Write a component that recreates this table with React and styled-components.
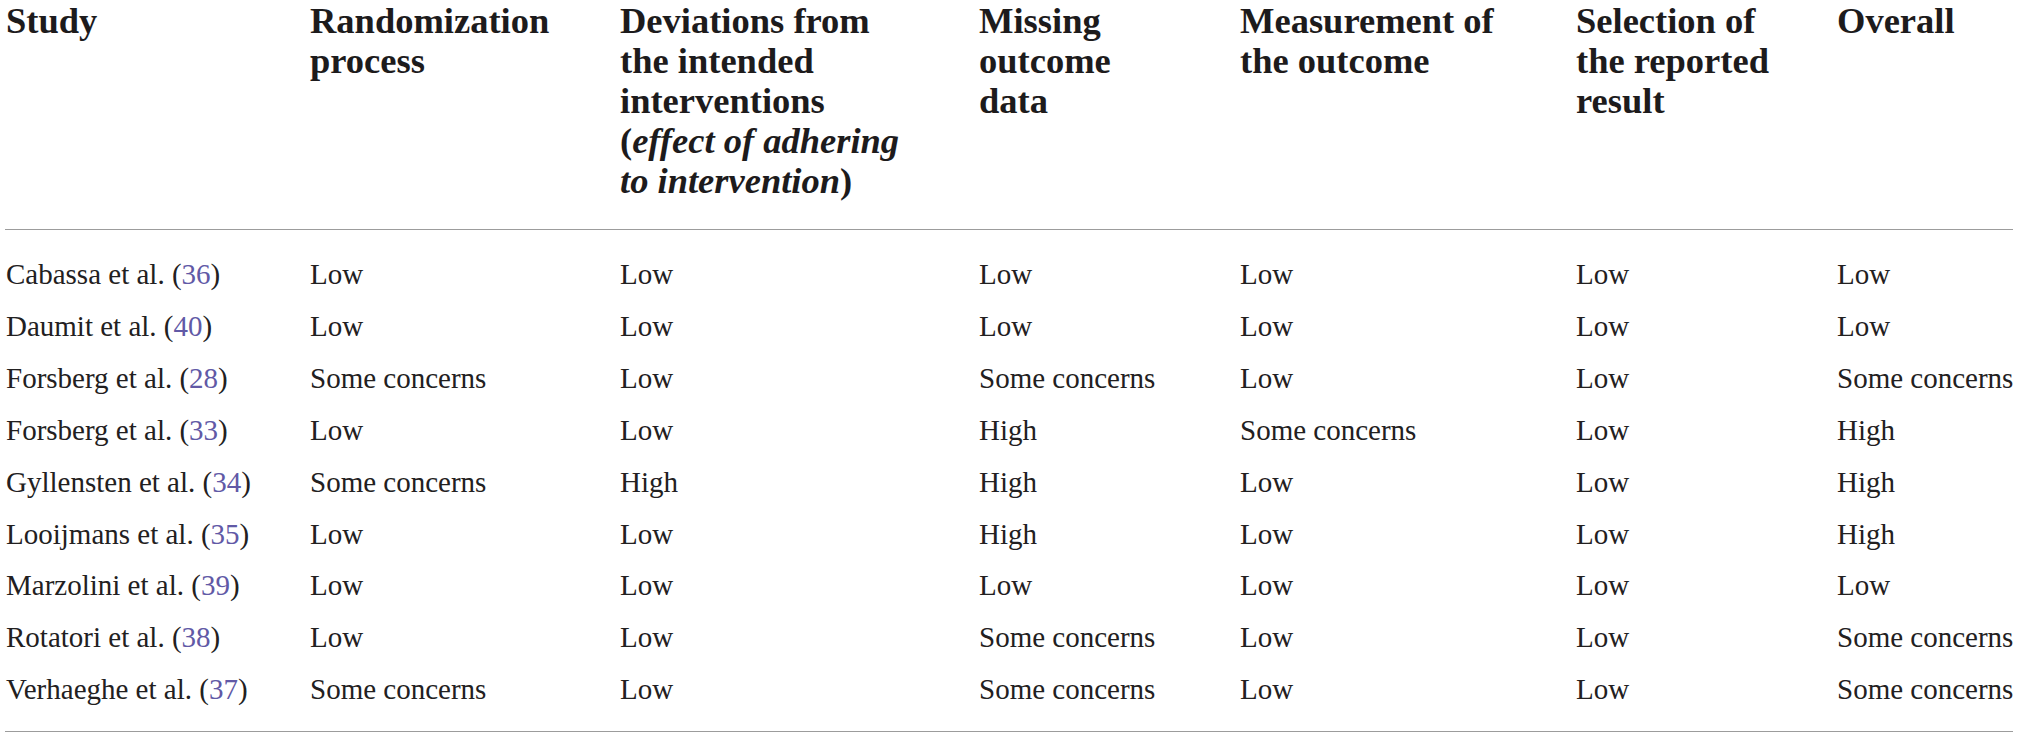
import styled, { createGlobalStyle } from "styled-components";

const GlobalStyle = createGlobalStyle`
    body {
        margin: 0;
        background: #ffffff;
        font-family: "Liberation Serif", "Times New Roman", serif;
        color: #1f1d1e;
    }
`

const columns = [305, 310, 359, 261, 336, 261, 176]

const headers = [
    ["Study"],
    ["Randomization", "process"],
    ["Deviations from", "the intended", "interventions", <>(<em>effect of adhering</em></>, <><em>to intervention</em>)</>],
    ["Missing", "outcome", "data"],
    ["Measurement of", "the outcome"],
    ["Selection of", "the reported", "result"],
    ["Overall"],
]

const rows = [
    { study: "Cabassa et al.", ref: 36, values: ["Low", "Low", "Low", "Low", "Low", "Low"] },
    { study: "Daumit et al.", ref: 40, values: ["Low", "Low", "Low", "Low", "Low", "Low"] },
    { study: "Forsberg et al.", ref: 28, values: ["Some concerns", "Low", "Some concerns", "Low", "Low", "Some concerns"] },
    { study: "Forsberg et al.", ref: 33, values: ["Low", "Low", "High", "Some concerns", "Low", "High"] },
    { study: "Gyllensten et al.", ref: 34, values: ["Some concerns", "High", "High", "Low", "Low", "High"] },
    { study: "Looijmans et al.", ref: 35, values: ["Low", "Low", "High", "Low", "Low", "High"] },
    { study: "Marzolini et al.", ref: 39, values: ["Low", "Low", "Low", "Low", "Low", "Low"] },
    { study: "Rotatori et al.", ref: 38, values: ["Low", "Low", "Some concerns", "Low", "Low", "Some concerns"] },
    { study: "Verhaeghe et al.", ref: 37, values: ["Some concerns", "Low", "Some concerns", "Low", "Low", "Some concerns"] },
]

export default function App() {
    return (
        <>
            <GlobalStyle />
            <Page>
                <Table>
                    <colgroup>
                        {columns.map((w, i) => <col key={i} style={{ width: `${w}px` }} />)}
                    </colgroup>
                    <thead>
                        <tr>
                            {headers.map((lines, i) => (
                                <HeadCell key={i} $first={i === 0}>
                                    {lines.map((line, j) => (
                                        <span key={j}>{line}{j < lines.length - 1 && <br />}</span>
                                    ))}
                                </HeadCell>
                            ))}
                        </tr>
                    </thead>
                    <tbody>
                        {rows.map((row, i) => (
                            <Row key={i}>
                                <Cell $first>
                                    {row.study} (<RefLink>{row.ref}</RefLink>)
                                </Cell>
                                {row.values.map((v, j) => (
                                    <Cell key={j}>{v}</Cell>
                                ))}
                            </Row>
                        ))}
                    </tbody>
                </Table>
            </Page>
        </>
    )
}

const Page = styled.div`
    padding: 0 6px 0 5px;
`

const Table = styled.table`
    width: 2008px;
    table-layout: fixed;
    border-collapse: collapse;
    border-bottom: 1px solid #9c9c9c;
`

const HeadCell = styled.th`
    text-align: left;
    vertical-align: top;
    padding: 1px 0 28px ${props => props.$first ? '1px' : '0'};
    border-bottom: 1px solid #9c9c9c;
    font-size: 36.5px;
    line-height: 40px;
    font-weight: 700;
    white-space: nowrap;
    color: #1d1b1c;

    em {
        font-style: italic;
    }
`

const Row = styled.tr`
    &:first-child td {
        padding-top: 19px;
    }

    &:last-child td {
        padding-bottom: 15px;
    }
`

const Cell = styled.td`
    padding: 0 0 0 ${props => props.$first ? '1px' : '0'};
    font-size: 29px;
    line-height: 51.9px;
    white-space: nowrap;
    vertical-align: top;
    color: #222021;
`

const RefLink = styled.span`
    color: #6159a6;
`
